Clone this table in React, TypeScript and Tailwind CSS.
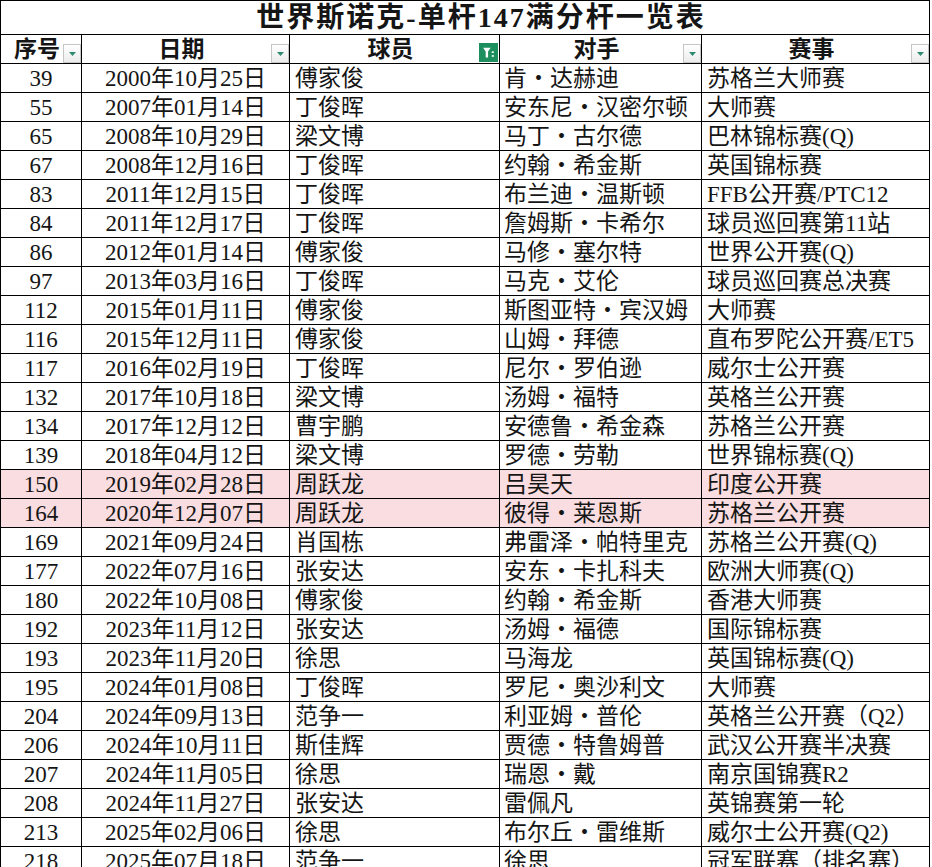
const FONT = '"Liberation Serif", "Noto Sans CJK SC", serif'

const ROWS: [string, string, string, string, string, boolean?][] = [
  ['39', '2000年10月25日', '傅家俊', '肯・达赫迪', '苏格兰大师赛'],
  ['55', '2007年01月14日', '丁俊晖', '安东尼・汉密尔顿', '大师赛'],
  ['65', '2008年10月29日', '梁文博', '马丁・古尔德', '巴林锦标赛(Q)'],
  ['67', '2008年12月16日', '丁俊晖', '约翰・希金斯', '英国锦标赛'],
  ['83', '2011年12月15日', '丁俊晖', '布兰迪・温斯顿', 'FFB公开赛/PTC12'],
  ['84', '2011年12月17日', '丁俊晖', '詹姆斯・卡希尔', '球员巡回赛第11站'],
  ['86', '2012年01月14日', '傅家俊', '马修・塞尔特', '世界公开赛(Q)'],
  ['97', '2013年03月16日', '丁俊晖', '马克・艾伦', '球员巡回赛总决赛'],
  ['112', '2015年01月11日', '傅家俊', '斯图亚特・宾汉姆', '大师赛'],
  ['116', '2015年12月11日', '傅家俊', '山姆・拜德', '直布罗陀公开赛/ET5'],
  ['117', '2016年02月19日', '丁俊晖', '尼尔・罗伯逊', '威尔士公开赛'],
  ['132', '2017年10月18日', '梁文博', '汤姆・福特', '英格兰公开赛'],
  ['134', '2017年12月12日', '曹宇鹏', '安德鲁・希金森', '苏格兰公开赛'],
  ['139', '2018年04月12日', '梁文博', '罗德・劳勒', '世界锦标赛(Q)'],
  ['150', '2019年02月28日', '周跃龙', '吕昊天', '印度公开赛', true],
  ['164', '2020年12月07日', '周跃龙', '彼得・莱恩斯', '苏格兰公开赛', true],
  ['169', '2021年09月24日', '肖国栋', '弗雷泽・帕特里克', '苏格兰公开赛(Q)'],
  ['177', '2022年07月16日', '张安达', '安东・卡扎科夫', '欧洲大师赛(Q)'],
  ['180', '2022年10月08日', '傅家俊', '约翰・希金斯', '香港大师赛'],
  ['192', '2023年11月12日', '张安达', '汤姆・福德', '国际锦标赛'],
  ['193', '2023年11月20日', '徐思', '马海龙', '英国锦标赛(Q)'],
  ['195', '2024年01月08日', '丁俊晖', '罗尼・奥沙利文', '大师赛'],
  ['204', '2024年09月13日', '范争一', '利亚姆・普伦', '英格兰公开赛（Q2）'],
  ['206', '2024年10月11日', '斯佳辉', '贾德・特鲁姆普', '武汉公开赛半决赛'],
  ['207', '2024年11月05日', '徐思', '瑞恩・戴', '南京国锦赛R2'],
  ['208', '2024年11月27日', '张安达', '雷佩凡', '英锦赛第一轮'],
  ['213', '2025年02月06日', '徐思', '布尔丘・雷维斯', '威尔士公开赛(Q2)'],
  ['218', '2025年07月18日', '范争一', '徐思', '冠军联赛（排名赛）'],
]

function DropButton() {
  return (
    <span className="absolute right-0 bottom-0 w-[18px] h-[19px] border border-[#c6c6c6] bg-gradient-to-b from-white to-[#ececec] flex items-center justify-center">
      <svg width="7" height="4" viewBox="0 0 7 4">
        <path d="M0 0h7L3.5 4z" fill="#2e8b72" />
      </svg>
    </span>
  )
}

function FilterButton() {
  return (
    <span className="absolute right-[1px] bottom-[1px] w-[19px] h-[19px] bg-[#1d8f5e] flex items-center justify-center">
      <svg width="13" height="13" viewBox="0 0 12 12">
        <path d="M1 1.5h7L5.6 5v5.5H3.4V5z" fill="#fff" />
        <rect x="9" y="5" width="2" height="1.4" fill="#fff" />
        <rect x="9" y="8.5" width="2" height="1.4" fill="#fff" />
      </svg>
    </span>
  )
}

function HeaderCell({ label, filter }: { label: string; filter?: boolean }) {
  return (
    <div className="relative h-[29px] border-r border-b border-black flex items-center justify-center font-bold text-[23px] leading-none">
      <span className="pr-2">{label}</span>
      {filter ? <FilterButton /> : <DropButton />}
    </div>
  )
}

export default function App() {
  return (
    <div className="w-[932px] h-[867px] overflow-hidden bg-white text-[#151515]" style={{ fontFamily: FONT }}>
      <div className="w-[930px] border-l border-t border-black grid grid-cols-[81px_208px_210px_202px_228px]">
        {/* 标题行 */}
        <div className="col-span-5 h-[34px] border-r border-b border-black flex items-center justify-center pl-8 text-[28px] font-bold tracking-[2px] leading-none">
          世界斯诺克-单杆147满分杆一览表
        </div>

        <HeaderCell label="序号" />
        <HeaderCell label="日期" />
        <HeaderCell label="球员" filter />
        <HeaderCell label="对手" />
        <HeaderCell label="赛事" />

        {ROWS.map(([no, date, player, opp, event, hl]) => {
          const bg = hl ? 'bg-[#f9dde0]' : 'bg-white'
          const cell = `h-[29px] border-r border-b border-black flex items-center text-[23px] leading-none whitespace-nowrap overflow-hidden ${bg}`
          return (
            <div key={no} className="contents">
              <div className={`${cell} justify-center`}>{no}</div>
              <div className={`${cell} justify-center`}>{date}</div>
              <div className={`${cell} pl-[5px]`}>{player}</div>
              <div className={`${cell} pl-[4px]`}>{opp}</div>
              <div className={`${cell} pl-[5px]`}>{event}</div>
            </div>
          )
        })}
      </div>
    </div>
  )
}
